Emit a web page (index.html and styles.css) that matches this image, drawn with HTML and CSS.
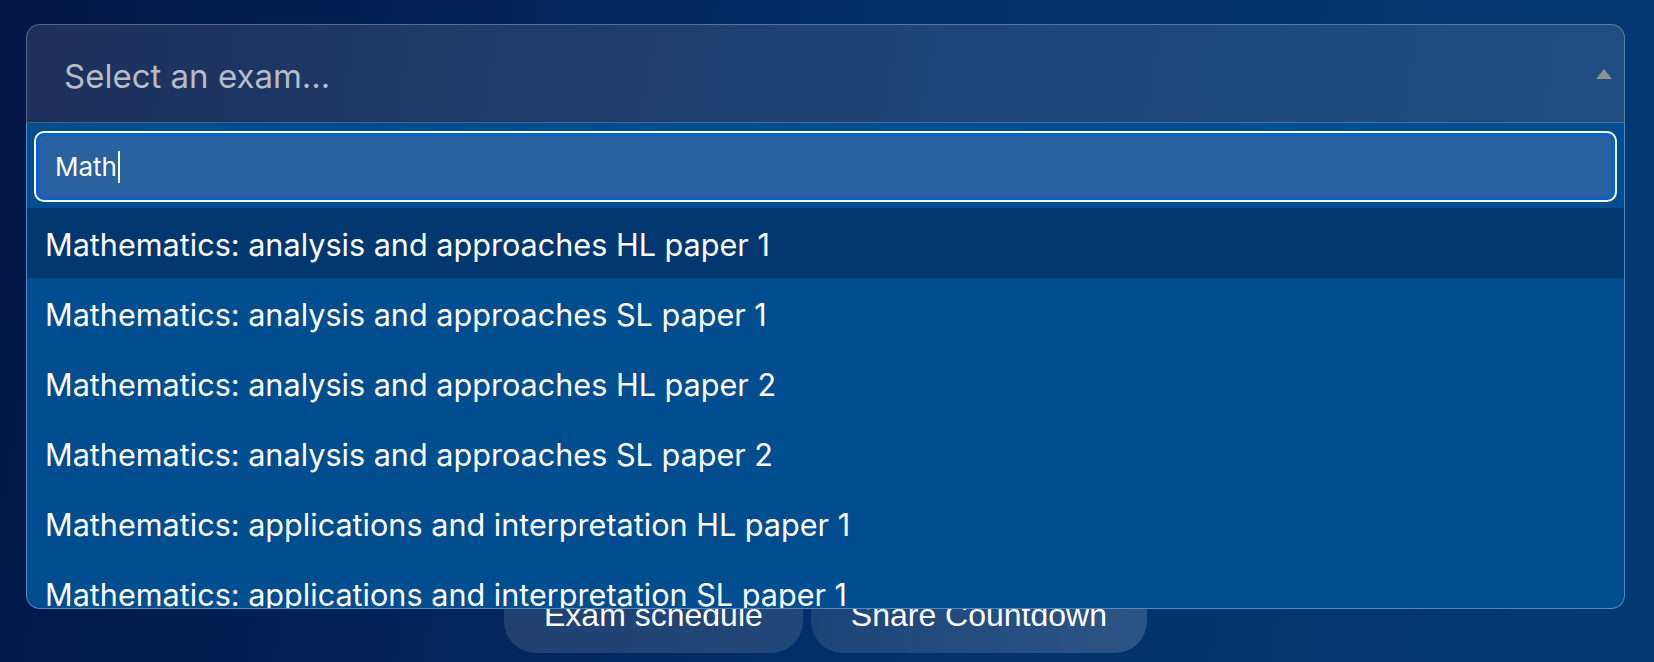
FILE: index.html
```html
<!DOCTYPE html>
<html lang="en">
<head>
<meta charset="utf-8">
<title>Exam countdown</title>
<link rel="stylesheet" href="styles.css">
</head>
<body>
<main class="page">
  <div class="combo">
    <div class="select">
      <span class="placeholder">Select an exam...</span>
      <svg class="arrow" width="16" height="10" viewBox="0 0 16 10"><path d="M0 10 L8 0 L16 10 Z" fill="#8a8f99"/></svg>
    </div>
    <div class="dropdown">
      <div class="search-wrap">
        <div class="search">Math<span class="caret"></span></div>
      </div>
      <ul class="options">
        <li class="option active">Mathematics: analysis and approaches HL paper 1</li>
        <li class="option">Mathematics: analysis and approaches SL paper 1</li>
        <li class="option">Mathematics: analysis and approaches HL paper 2</li>
        <li class="option">Mathematics: analysis and approaches SL paper 2</li>
        <li class="option">Mathematics: applications and interpretation HL paper 1</li>
        <li class="option">Mathematics: applications and interpretation SL paper 1</li>
        <li class="option">Mathematics: applications and interpretation HL paper 2</li>
      </ul>
    </div>
  </div>
  <div class="actions">
    <button class="btn">Exam schedule</button>
    <button class="btn btn-share">Share Countdown</button>
  </div>
</main>
</body>
</html>
```

FILE: styles.css
```css
html, body {
  margin: 0;
  height: 100%;
}
body {
  background: linear-gradient(100deg, #021646 0%, #03306a 55%, #043a74 100%);
  font-family: Inter, "Noto Sans", sans-serif;
  color: #fff;
  overflow: hidden;
}
.page {
  padding: 24px 29px 0 26px;
}
.combo {
  position: relative;
}
.select {
  box-sizing: border-box;
  height: 99px;
  display: flex;
  align-items: center;
  justify-content: space-between;
  padding: 0 12px 0 37px;
  background: rgba(255, 255, 255, 0.11);
  border: 1px solid rgba(255, 255, 255, 0.26);
  border-bottom-color: rgba(255, 255, 255, 0.2);
  border-radius: 14px 14px 0 0;
}
.placeholder {
  font-size: 33px;
  color: #b6bcca;
  padding-top: 5px;
}
.arrow {
  display: block;
}
.dropdown {
  position: absolute;
  top: 100%;
  left: 0;
  right: 0;
  height: 486px;
  box-sizing: border-box;
  background: #004e90;
  border: 1px solid rgba(130, 170, 220, 0.65);
  border-top: none;
  border-radius: 0 0 14px 14px;
  overflow: hidden;
}
.search-wrap {
  padding: 8px 7px 6px 7px;
}
.search {
  box-sizing: border-box;
  height: 71px;
  display: flex;
  align-items: center;
  padding-left: 19px;
  font-size: 26px;
  color: #fff;
  background: #2862a0;
  border: 2px solid #ffffff;
  border-radius: 10px;
  box-shadow: inset 0 0 0 3px #0a5fd2;
}
.caret {
  display: inline-block;
  width: 2px;
  height: 32px;
  background: #fff;
  margin-left: 1px;
}
.options {
  list-style: none;
  margin: 0;
  padding: 0;
}
.option {
  height: 70px;
  box-sizing: border-box;
  display: flex;
  align-items: center;
  padding-left: 18px;
  padding-top: 2px;
  font-size: 30.6px;
  color: #fff;
}
.option.active {
  background: #03376f;
}
.actions {
  display: flex;
  justify-content: center;
  gap: 8px;
  margin-top: 454px;
}
.btn {
  height: 76px;
  padding: 0 40px;
  border: none;
  border-radius: 32px;
  background: rgba(255, 255, 255, 0.12);
  color: #fff;
  font-family: "Liberation Sans", Arial, sans-serif;
  font-size: 32px;
}
.btn-share {
  background: linear-gradient(90deg, rgba(255,255,255,0.1), rgba(255,255,255,0.16));
}
```
